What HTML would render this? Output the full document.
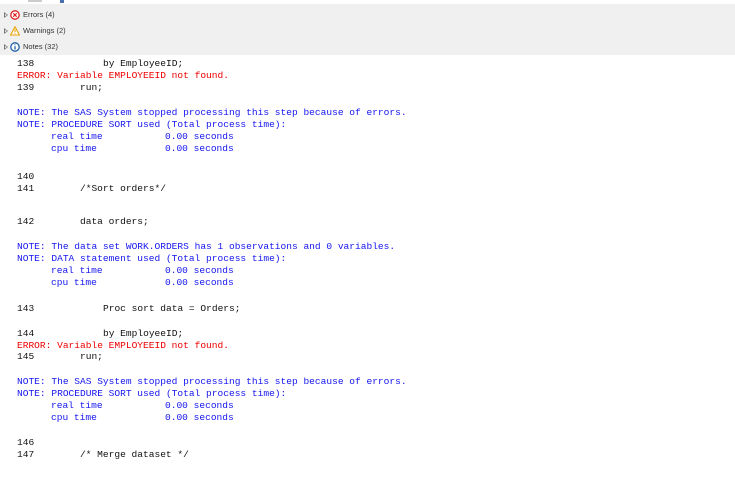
<!DOCTYPE html>
<html><head><style>
body{margin:0;width:735px;height:477px;background:#fff;position:relative;overflow:hidden}
.hd{position:absolute;left:0;top:4px;width:735px;height:51px;background:#f0f0f0}
.it{position:absolute;left:4px;font:7.5px "Liberation Sans",sans-serif;color:#333;height:10px;line-height:10px}
.it svg{position:absolute;top:0}
.it span{position:absolute;left:19px;white-space:nowrap}
.tri{position:absolute;left:0;top:2px;width:0;height:0;border-left:4px solid #777;border-top:3px solid transparent;border-bottom:3px solid transparent}
.tri:after{content:"";position:absolute;left:-3px;top:-1.5px;border-left:2px solid #fff;border-top:1.5px solid transparent;border-bottom:1.5px solid transparent}
.l{position:absolute;font:9.55px "Liberation Mono",monospace;white-space:pre;line-height:12px;color:#111}
.e{color:#e00}.n{color:#1515f0}
</style></head><body>
<div style="position:absolute;left:28px;top:0;width:14px;height:2px;background:#ccc"></div>
<div style="position:absolute;left:60px;top:0;width:4px;height:3px;background:#4a6fb0"></div>
<div class="hd"></div>
<div class="it" style="top:10px"><div class="tri"></div><svg style="left:6px" width="10" height="10" viewBox="0 0 10 10"><circle cx="5" cy="5" r="4.2" fill="#fff" stroke="#d22" stroke-width="1.3"/><path d="M3.3 3.3L6.7 6.7M6.7 3.3L3.3 6.7" stroke="#d22" stroke-width="1.2"/></svg><span>Errors (4)</span></div>
<div class="it" style="top:26px"><div class="tri"></div><svg style="left:6px" width="10" height="10" viewBox="0 0 10 10"><path d="M5 0.8L9.4 9H0.6Z" fill="#fff" stroke="#e8a100" stroke-width="1.1"/><path d="M5 3.5V6.3M5 7.2V8" stroke="#e8a100" stroke-width="1.1"/></svg><span>Warnings (2)</span></div>
<div class="it" style="top:42px"><div class="tri"></div><svg style="left:6px" width="10" height="10" viewBox="0 0 10 10"><circle cx="5" cy="5" r="4.2" fill="#fff" stroke="#1e5fa8" stroke-width="1.3"/><path d="M5 4.2V7.5M5 2.5V3.3" stroke="#1e5fa8" stroke-width="1.3"/></svg><span>Notes (32)</span></div>

<div class="l" style="left:17px;top:58px">138</div><div class="l" style="left:103px;top:58px">by EmployeeID;</div>
<div class="l e" style="left:17px;top:70px">ERROR: Variable EMPLOYEEID not found.</div>
<div class="l" style="left:17px;top:82px">139</div><div class="l" style="left:80px;top:82px">run;</div>
<div class="l n" style="left:17px;top:107px">NOTE: The SAS System stopped processing this step because of errors.</div>
<div class="l n" style="left:17px;top:119px">NOTE: PROCEDURE SORT used (Total process time):</div>
<div class="l n" style="left:51px;top:131px">real time</div><div class="l n" style="left:165px;top:131px">0.00 seconds</div>
<div class="l n" style="left:51px;top:143px">cpu time</div><div class="l n" style="left:165px;top:143px">0.00 seconds</div>
<div class="l" style="left:17px;top:171px">140</div>
<div class="l" style="left:17px;top:183px">141</div><div class="l" style="left:80px;top:183px">/*Sort orders*/</div>
<div class="l" style="left:17px;top:216px">142</div><div class="l" style="left:80px;top:216px">data orders;</div>
<div class="l n" style="left:17px;top:241px">NOTE: The data set WORK.ORDERS has 1 observations and 0 variables.</div>
<div class="l n" style="left:17px;top:253px">NOTE: DATA statement used (Total process time):</div>
<div class="l n" style="left:51px;top:265px">real time</div><div class="l n" style="left:165px;top:265px">0.00 seconds</div>
<div class="l n" style="left:51px;top:277px">cpu time</div><div class="l n" style="left:165px;top:277px">0.00 seconds</div>
<div class="l" style="left:17px;top:303px">143</div><div class="l" style="left:103px;top:303px">Proc sort data = Orders;</div>
<div class="l" style="left:17px;top:328px">144</div><div class="l" style="left:103px;top:328px">by EmployeeID;</div>
<div class="l e" style="left:17px;top:340px">ERROR: Variable EMPLOYEEID not found.</div>
<div class="l" style="left:17px;top:351px">145</div><div class="l" style="left:80px;top:351px">run;</div>
<div class="l n" style="left:17px;top:376px">NOTE: The SAS System stopped processing this step because of errors.</div>
<div class="l n" style="left:17px;top:388px">NOTE: PROCEDURE SORT used (Total process time):</div>
<div class="l n" style="left:51px;top:400px">real time</div><div class="l n" style="left:165px;top:400px">0.00 seconds</div>
<div class="l n" style="left:51px;top:412px">cpu time</div><div class="l n" style="left:165px;top:412px">0.00 seconds</div>
<div class="l" style="left:17px;top:437px">146</div>
<div class="l" style="left:17px;top:449px">147</div><div class="l" style="left:80px;top:449px">/* Merge dataset */</div>
</body></html>
